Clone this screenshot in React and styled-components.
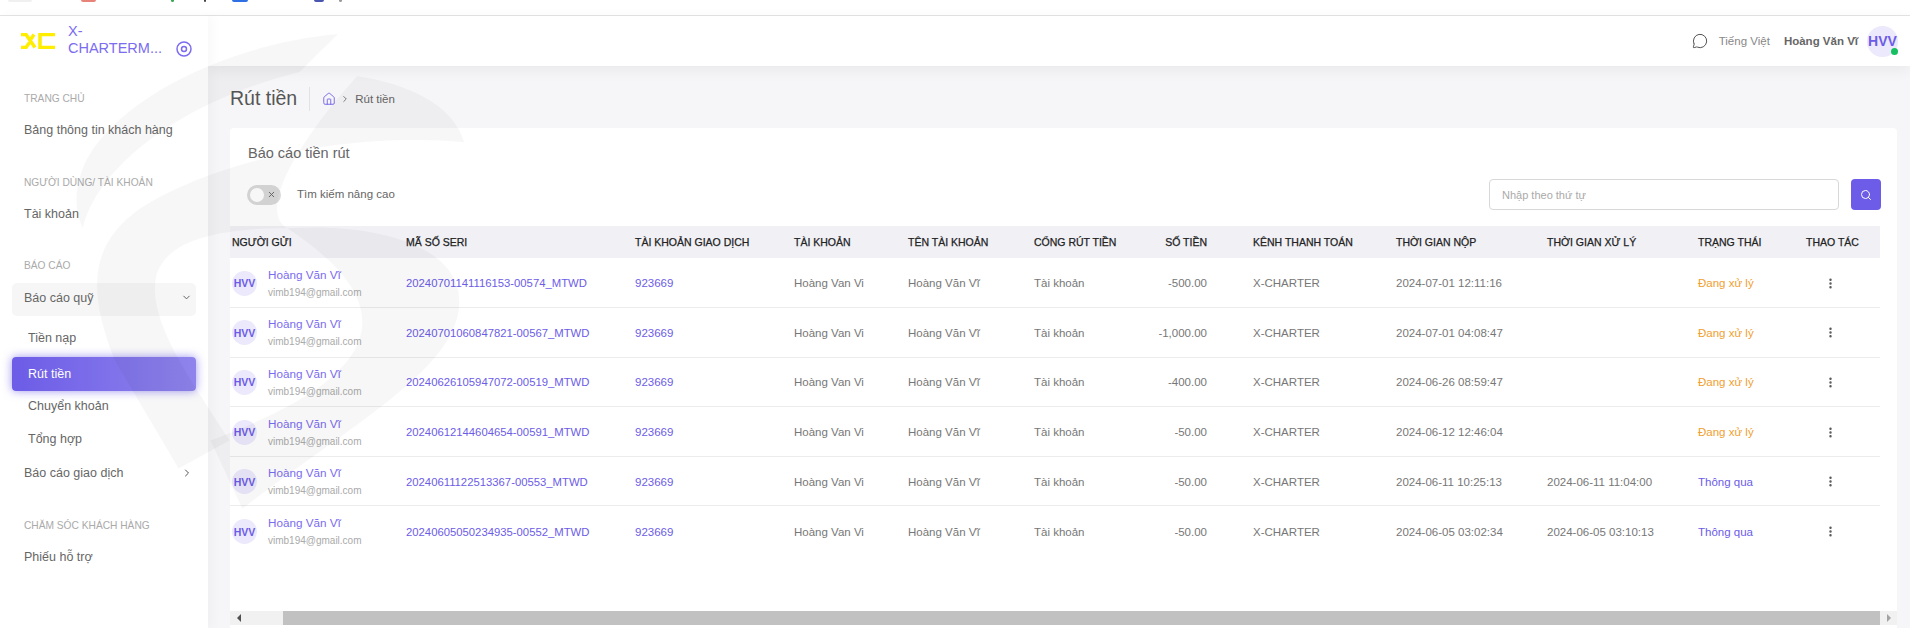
import React from "react";
import styled, { createGlobalStyle } from "styled-components";
import { ChevronDown, ChevronRight, EllipsisVertical, House, MessageCircle, Search, X } from "lucide-react";

const GlobalStyle = createGlobalStyle`
    html, body { margin: 0; padding: 0; background: #fff; }
    body { font-family: "Liberation Sans", Arial, sans-serif; }
    * { box-sizing: border-box; }
`;

const purple = "#6c5ce7";

const Page = styled.div`
    position: relative;
    width: 1910px;
    height: 628px;
    overflow: hidden;
    display: flex;
    flex-direction: column;
    background: #f6f6f8;
`;

const BrowserStrip = styled.div`
    height: 16px;
    flex: none;
    display: flex;
    align-items: flex-start;
    background: #fff;
    border-bottom: 1px solid #e4e4e4;
`;

const StripMark = styled.span`
    height: 2px;
    width: ${(p) => p.$w}px;
    margin-left: ${(p) => p.$gap}px;
    background: ${(p) => p.$color};
    border-radius: 0 0 3px 3px;
`;

const Body = styled.div`
    flex: 1;
    display: flex;
    min-height: 0;
`;

const Sidebar = styled.aside`
    width: 208px;
    flex: none;
    background: #fff;
    box-shadow: 4px 0 12px rgba(0, 0, 0, 0.03);
    z-index: 2;
`;

const LogoRow = styled.div`
    height: 50px;
    display: flex;
    align-items: center;
    padding-left: 20px;
`;

const BrandName = styled.div`
    width: 98px;
    margin-left: 13px;
    padding-bottom: 3px;
    font-size: 14.5px;
    line-height: 17px;
    color: #7b6cf0;
    span {
        display: block;
        white-space: nowrap;
    }
`;

const TargetIcon = styled.svg`
    width: 16px;
    height: 16px;
    margin: 15px 0 0 10px;
`;

const Nav = styled.nav`
    padding-top: 23px;
    display: flex;
    flex-direction: column;
    gap: 25.5px;
`;

const NavSection = styled.div`
    display: flex;
    flex-direction: column;
`;

const SectionLabel = styled.div`
    height: 20px;
    line-height: 20px;
    padding-left: 24px;
    margin-bottom: ${(p) => (p.$tight ? 7 : 4)}px;
    font-size: 10.2px;
    color: #aaa;
`;

const NavItem = styled.div`
    height: ${(p) => (p.$tall ? 35 : 34)}px;
    padding: 0 15px 0 24px;
    display: flex;
    align-items: center;
    justify-content: space-between;
    font-size: 12.5px;
    color: #666;
    svg { color: #555; }
`;

const GroupItem = styled(NavItem)`
    height: 33px;
    margin: 0 12px 5px;
    padding: 0 4px 4px 12px;
    background: #f6f6f6;
    border-radius: 5px;
`;

const SubItem = styled.div`
    height: 33px;
    display: flex;
    align-items: center;
    padding-left: 28px;
    font-size: 12.5px;
    color: #666;
`;

const ActiveItem = styled.div`
    height: 34px;
    margin: 3px 12px -2px;
    padding-left: 16px;
    display: flex;
    align-items: center;
    font-size: 12.5px;
    color: #fff;
    border-radius: 4px;
    background: linear-gradient(90deg, #6c5ce7, #8f84ec);
    box-shadow: 0 0 10px rgba(108, 92, 231, 0.65);
`;

const Main = styled.main`
    flex: 1;
    min-width: 0;
    display: flex;
    flex-direction: column;
`;

const Header = styled.header`
    height: 50px;
    flex: none;
    display: flex;
    align-items: center;
    justify-content: flex-end;
    padding-right: 12px;
    background: #fff;
    box-shadow: 0 4px 14px rgba(0, 0, 0, 0.06);
    z-index: 1;
`;

const ChatButton = styled.span`
    display: flex;
    color: #555;
    margin-right: 11px;
`;

const Lang = styled.span`
    font-size: 11.5px;
    color: #888;
    margin-right: 14px;
`;

const UserName = styled.span`
    font-size: 11.5px;
    font-weight: 700;
    color: #666;
    margin-right: 9px;
`;

const HeaderAvatar = styled.div`
    position: relative;
    width: 31px;
    height: 31px;
    border-radius: 50%;
    background: #ebe9fb;
    color: ${purple};
    font-size: 14px;
    font-weight: 700;
    display: flex;
    align-items: center;
    justify-content: center;
`;

const OnlineDot = styled.span`
    position: absolute;
    right: 0;
    bottom: 2px;
    width: 7px;
    height: 7px;
    border-radius: 50%;
    background: #16c060;
`;

const TitleBar = styled.div`
    height: 62px;
    flex: none;
    padding: 3px 0 0 22px;
    display: flex;
    align-items: center;
`;

const PageTitle = styled.h1`
    margin: 0;
    font-size: 19.5px;
    font-weight: 400;
    color: #555;
`;

const Crumbs = styled.div`
    height: 24px;
    margin-left: 12px;
    padding-left: 12px;
    border-left: 1px solid #e2e2e2;
    display: flex;
    align-items: center;
    gap: 4px;
    font-size: 11.5px;
    color: #666;
    svg { flex: none; }
    span { margin-left: 1px; }
`;

const Card = styled.section`
    flex: 1;
    min-height: 0;
    margin: 0 13px 0 22px;
    background: #fff;
    border-radius: 4px 4px 0 0;
    display: flex;
    flex-direction: column;
`;

const CardTitle = styled.div`
    height: 26px;
    margin: 12px 0 13px;
    padding-left: 18px;
    line-height: 26px;
    font-size: 14.5px;
    color: #666;
`;

const Toolbar = styled.div`
    height: 31px;
    padding: 0 16px 0 17px;
    display: flex;
    align-items: center;
`;

const Toggle = styled.span`
    width: 34px;
    height: 20px;
    border-radius: 10px;
    background: #d9d9d9;
    padding: 0 5px 0 3px;
    display: flex;
    align-items: center;
    justify-content: space-between;
    color: #666;
`;

const Knob = styled.span`
    width: 14px;
    height: 14px;
    border-radius: 50%;
    background: #fff;
`;

const ToggleLabel = styled.span`
    margin: 0 auto 0 16px;
    font-size: 11.5px;
    color: #666;
    position: relative;
    top: -1px;
`;

const SearchInput = styled.input`
    width: 350px;
    height: 31px;
    padding: 0 12px;
    border: 1px solid #d8d8d8;
    border-radius: 4px;
    font: 11px "Liberation Sans", Arial, sans-serif;
    background: #fff;
    &::placeholder { color: #aaa; }
`;

const SearchButton = styled.button`
    width: 30px;
    height: 31px;
    margin-left: 12px;
    border: 0;
    padding: 0;
    border-radius: 4px;
    background: ${purple};
    color: #fff;
    display: flex;
    align-items: center;
    justify-content: center;
`;

const TableWrap = styled.div`
    flex: 1;
    min-height: 0;
    margin-top: 16px;
    padding-right: 16px;
`;

const Table = styled.table`
    width: 1650px;
    table-layout: fixed;
    border-collapse: collapse;
`;

const Th = styled.th`
    height: 32px;
    padding: ${(p) => (p.$right ? "0 44px 0 2px" : "0 2px")};
    background: #f0f0f5;
    text-align: ${(p) => (p.$right ? "right" : "left")};
    font-size: 10.5px;
    font-weight: 400;
    color: #222;
    -webkit-text-stroke: 0.25px #222;
    white-space: nowrap;
`;

const Tr = styled.tr`
    height: 49.6px;
    &:not(:last-child) { border-bottom: 1px solid #ececec; }
`;

const Td = styled.td`
    padding: ${(p) => (p.$right ? "1px 44px 0 2px" : "1px 2px 0")};
    text-align: ${(p) => (p.$right ? "right" : "left")};
    font-size: ${(p) => p.$size || 11.5}px;
    color: ${(p) => p.$color || "#777"};
    white-space: nowrap;
`;

const Sender = styled.div`
    display: flex;
    align-items: center;
`;

const SenderAvatar = styled.span`
    width: 25px;
    height: 25px;
    flex: none;
    border-radius: 50%;
    background: #ebe9fb;
    color: ${purple};
    font-size: 10.5px;
    font-weight: 700;
    display: flex;
    align-items: center;
    justify-content: center;
`;

const SenderText = styled.div`
    margin-left: 11px;
    display: flex;
    flex-direction: column;
    gap: 4px;
`;

const SenderName = styled.span`
    font-size: 11.7px;
    color: #7b6cf0;
    line-height: 14px;
`;

const SenderMail = styled.span`
    font-size: 10px;
    color: #aaa;
    line-height: 13px;
`;

const ActionIcon = styled.span`
    display: flex;
    padding-left: 18px;
    color: #555;
`;

const Scrollbar = styled.div`
    flex: none;
    height: 14px;
    margin-bottom: 3px;
    display: flex;
    background: #f1f1f1;
`;

const ScrollArrow = styled.span`
    width: 17px;
    flex: none;
    display: flex;
    align-items: center;
    justify-content: center;
    &::before {
        content: "";
        border: 4px solid transparent;
        border-left: ${(p) => (p.$right ? "4px solid #a3a3a3" : "0")};
        border-right: ${(p) => (p.$right ? "0" : "4px solid #505050")};
    }
`;

const ScrollTrack = styled.div`
    flex: 1;
    padding-left: 36px;
    display: flex;
`;

const ScrollThumb = styled.div`
    flex: 1;
    background: #c1c1c1;
`;

const Watermark = styled.svg`
    position: absolute;
    left: 0;
    top: 0;
    width: 1000px;
    height: 628px;
    z-index: 5;
    pointer-events: none;
`;

const statusColor = { "Đang xử lý": "#f0a030", "Thông qua": purple };

const rows = [
    ["20240701141116153-00574_MTWD", "-500.00", "2024-07-01 12:11:16", "", "Đang xử lý"],
    ["20240701060847821-00567_MTWD", "-1,000.00", "2024-07-01 04:08:47", "", "Đang xử lý"],
    ["20240626105947072-00519_MTWD", "-400.00", "2024-06-26 08:59:47", "", "Đang xử lý"],
    ["20240612144604654-00591_MTWD", "-50.00", "2024-06-12 12:46:04", "", "Đang xử lý"],
    ["20240611122513367-00553_MTWD", "-50.00", "2024-06-11 10:25:13", "2024-06-11 11:04:00", "Thông qua"],
    ["20240605050234935-00552_MTWD", "-50.00", "2024-06-05 03:02:34", "2024-06-05 03:10:13", "Thông qua"],
];

const columns = [
    { label: "NGƯỜI GỬI", width: 174 },
    { label: "MÃ SỐ SERI", width: 229 },
    { label: "TÀI KHOẢN GIAO DỊCH", width: 159 },
    { label: "TÀI KHOẢN", width: 114 },
    { label: "TÊN TÀI KHOẢN", width: 126 },
    { label: "CỔNG RÚT TIỀN", width: 98 },
    { label: "SỐ TIỀN", width: 121, right: true },
    { label: "KÊNH THANH TOÁN", width: 143 },
    { label: "THỜI GIAN NỘP", width: 151 },
    { label: "THỜI GIAN XỬ LÝ", width: 151 },
    { label: "TRẠNG THÁI", width: 108 },
    { label: "THAO TÁC", width: 76 },
];

const Logo = () => (
    <svg width="35" height="16" viewBox="0 0 35 16" fill="none" stroke="#ffee00" strokeWidth="3.5">
        <path d="M1 1.5 L6 1.5 L15 14.5 M1 14.5 L6 14.5 L9.5 9.5 M11 6 L14 1.5" />
        <path d="M35 1.5 L20 1.5 L20 14.5 L35 14.5" />
    </svg>
);

export default function App() {
    return (
        <Page>
            <GlobalStyle />
            <BrowserStrip>
                <StripMark $w={24} $gap={8} $color="#f0f0f0" />
                <StripMark $w={15} $gap={49} $color="#e8837a" />
                <StripMark $w={3} $gap={75} $color="#3aa757" />
                <StripMark $w={2} $gap={30} $color="#444444" />
                <StripMark $w={16} $gap={26} $color="#2f6fe4" />
                <StripMark $w={10} $gap={66} $color="#4a55b0" />
                <StripMark $w={3} $gap={15} $color="#999999" />
            </BrowserStrip>
            <Body>
                <Sidebar>
                    <LogoRow>
                        <Logo />
                        <BrandName>
                            <span>X-</span>
                            <span>CHARTERM...</span>
                        </BrandName>
                        <TargetIcon viewBox="0 0 16 16" fill="none" stroke="#7b6cf0" strokeWidth="1.5">
                            <circle cx="8" cy="8" r="7" />
                            <circle cx="8" cy="8" r="2.5" />
                        </TargetIcon>
                    </LogoRow>
                    <Nav>
                        <NavSection>
                            <SectionLabel>TRANG CHỦ</SectionLabel>
                            <NavItem>Bảng thông tin khách hàng</NavItem>
                        </NavSection>
                        <NavSection>
                            <SectionLabel>NGƯỜI DÙNG/ TÀI KHOẢN</SectionLabel>
                            <NavItem>Tài khoản</NavItem>
                        </NavSection>
                        <NavSection>
                            <SectionLabel $tight>BÁO CÁO</SectionLabel>
                            <GroupItem>
                                Báo cáo quỹ
                                <ChevronDown size={11} />
                            </GroupItem>
                            <SubItem>Tiền nạp</SubItem>
                            <ActiveItem>Rút tiền</ActiveItem>
                            <SubItem>Chuyển khoản</SubItem>
                            <SubItem>Tổng hợp</SubItem>
                            <NavItem $tall>
                                Báo cáo giao dịch
                                <ChevronRight size={12} />
                            </NavItem>
                        </NavSection>
                        <NavSection>
                            <SectionLabel>CHĂM SÓC KHÁCH HÀNG</SectionLabel>
                            <NavItem>Phiếu hỗ trợ</NavItem>
                        </NavSection>
                    </Nav>
                </Sidebar>
                <Main>
                    <Header>
                        <ChatButton>
                            <MessageCircle size={16} strokeWidth={1.5} />
                        </ChatButton>
                        <Lang>Tiếng Việt</Lang>
                        <UserName>Hoàng Văn Vĩ</UserName>
                        <HeaderAvatar>
                            HVV
                            <OnlineDot />
                        </HeaderAvatar>
                    </Header>
                    <TitleBar>
                        <PageTitle>Rút tiền</PageTitle>
                        <Crumbs>
                            <House size={14} color={purple} strokeWidth={1.5} />
                            <ChevronRight size={10} />
                            <span>Rút tiền</span>
                        </Crumbs>
                    </TitleBar>
                    <Card>
                        <CardTitle>Báo cáo tiền rút</CardTitle>
                        <Toolbar>
                            <Toggle>
                                <Knob />
                                <X size={9} strokeWidth={2.5} />
                            </Toggle>
                            <ToggleLabel>Tìm kiếm nâng cao</ToggleLabel>
                            <SearchInput placeholder="Nhập theo thứ tự" />
                            <SearchButton>
                                <Search size={12} />
                            </SearchButton>
                        </Toolbar>
                        <TableWrap>
                            <Table>
                                <colgroup>
                                    {columns.map((c) => (
                                        <col key={c.label} width={c.width} />
                                    ))}
                                </colgroup>
                                <thead>
                                    <tr>
                                        {columns.map((c) => (
                                            <Th key={c.label} $right={c.right}>
                                                {c.label}
                                            </Th>
                                        ))}
                                    </tr>
                                </thead>
                                <tbody>
                                    {rows.map(([serial, amount, sent, done, status]) => (
                                        <Tr key={serial}>
                                            <Td>
                                                <Sender>
                                                    <SenderAvatar>HVV</SenderAvatar>
                                                    <SenderText>
                                                        <SenderName>Hoàng Văn Vĩ</SenderName>
                                                        <SenderMail>vimb194@gmail.com</SenderMail>
                                                    </SenderText>
                                                </Sender>
                                            </Td>
                                            <Td $color={purple} $size={11.3}>{serial}</Td>
                                            <Td $color={purple}>923669</Td>
                                            <Td>Hoàng Van Vi</Td>
                                            <Td>Hoàng Văn Vĩ</Td>
                                            <Td>Tài khoản</Td>
                                            <Td $right>{amount}</Td>
                                            <Td>X-CHARTER</Td>
                                            <Td>{sent}</Td>
                                            <Td>{done}</Td>
                                            <Td $color={statusColor[status]}>{status}</Td>
                                            <Td>
                                                <ActionIcon>
                                                    <EllipsisVertical size={13} strokeWidth={2.5} />
                                                </ActionIcon>
                                            </Td>
                                        </Tr>
                                    ))}
                                </tbody>
                            </Table>
                        </TableWrap>
                        <Scrollbar>
                            <ScrollArrow />
                            <ScrollTrack>
                                <ScrollThumb />
                            </ScrollTrack>
                            <ScrollArrow $right />
                        </Scrollbar>
                    </Card>
                </Main>
            </Body>
            <Watermark viewBox="0 0 1568 1568" preserveAspectRatio="none" fill="rgba(0,0,0,0.03)">
                <path d="M530 85 C 350 110 170 260 130 420 C 115 480 118 530 130 570 C 150 430 270 260 470 180 Z" />
                <path d="M560 190 C 640 210 710 260 728 355 C 560 330 350 390 220 520 C 150 600 130 700 180 900 L 280 1170 L 360 1100 C 300 950 230 800 245 690 C 260 600 340 570 450 570 C 400 520 480 330 560 190 Z" />
                <path d="M450 570 C 600 555 725 620 720 760 C 715 920 560 1050 380 1270 L 330 1100 C 460 1020 720 850 450 570 Z" />
            </Watermark>
        </Page>
    );
}
